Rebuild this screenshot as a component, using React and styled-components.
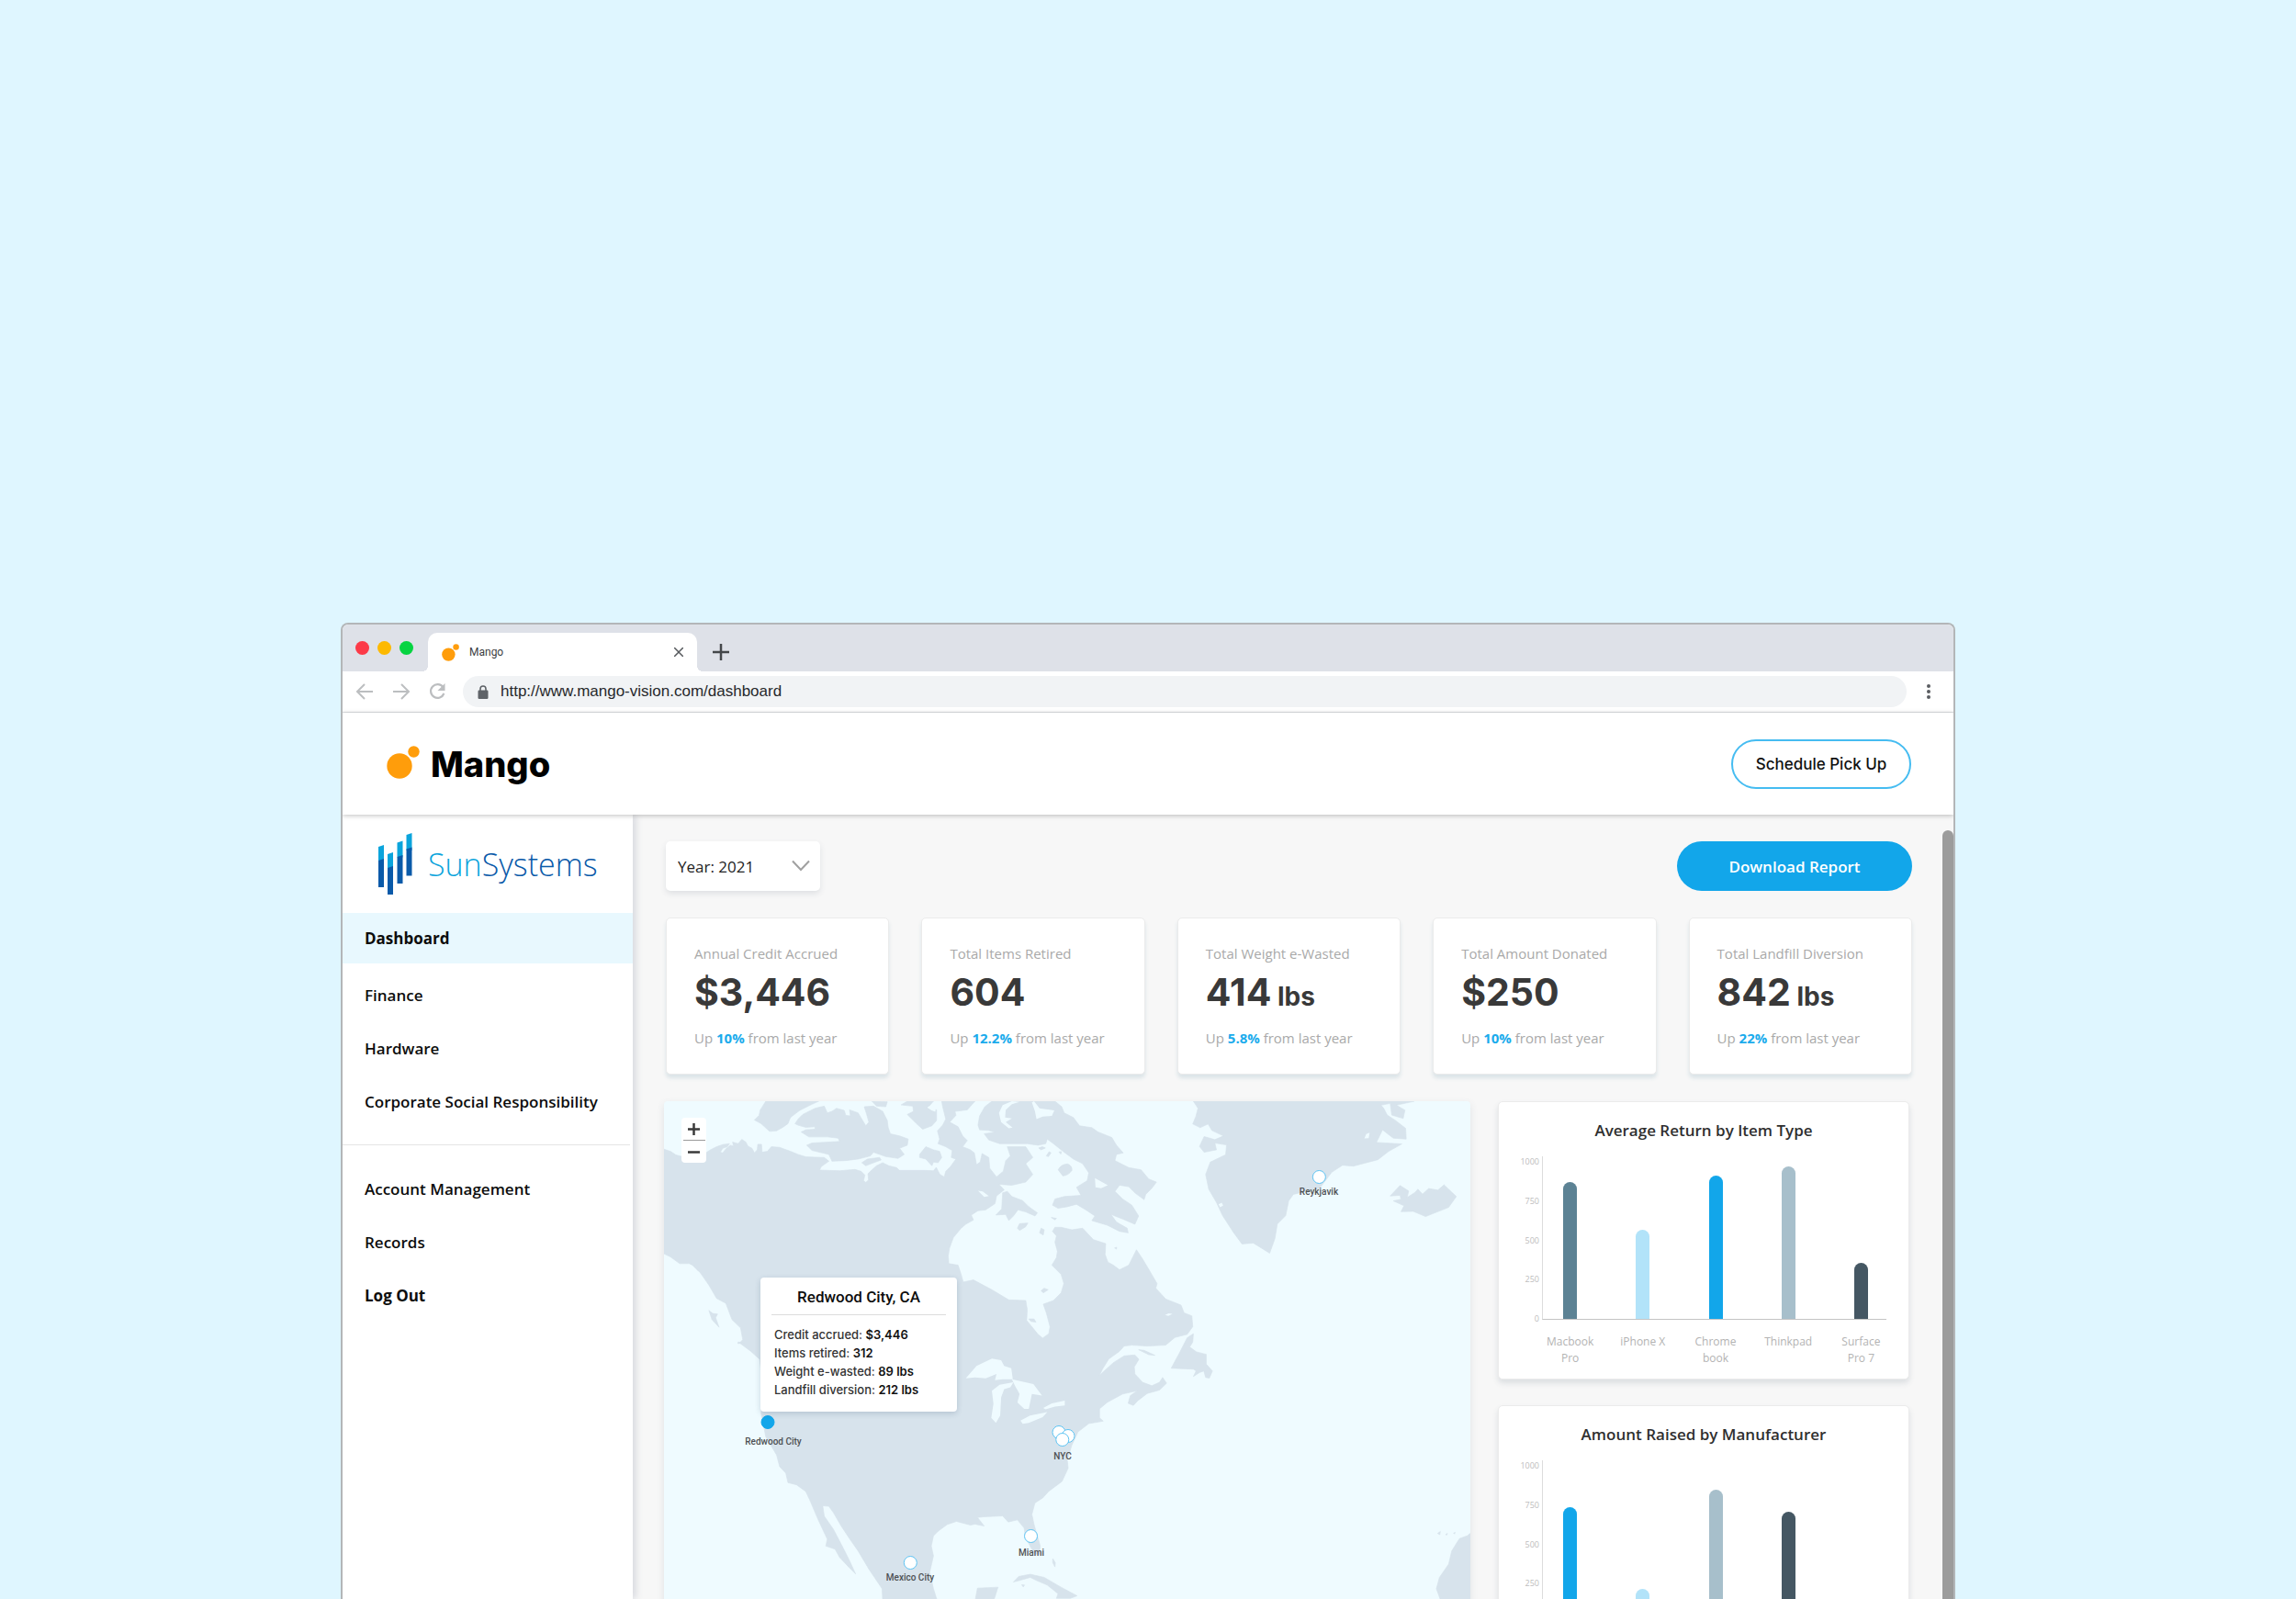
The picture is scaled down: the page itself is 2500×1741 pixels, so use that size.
import React, { useState } from 'react';
import styled, { createGlobalStyle } from 'styled-components';

const GlobalStyle = createGlobalStyle`
  * {
    box-sizing: border-box;
  }

  body {
    margin: 0;
    background: #dff6ff;
    font-family: 'Open Sans', 'Noto Sans', sans-serif;
    color: #111;
  }

  button, select, input {
    font: inherit;
    color: inherit;
  }

  button {
    cursor: pointer;
  }

  h1, h2, h3, p {
    margin: 0;
    padding: 0;
  }
`;

const Page = styled.div`
  display: flex;
  height: 100vh;
  overflow: hidden;
  padding: 678px 371px 0;
`;

/* ---------- browser window ---------- */

const BrowserWindow = styled.div`
  flex: 1;
  min-width: 0;
  display: flex;
  flex-direction: column;
  overflow: hidden;
  border: 2px solid #b3b6b8;
  border-bottom: none;
  border-radius: 8px 8px 0 0;
  background: white;
`;

const TabStrip = styled.div`
  display: flex;
  align-items: flex-end;
  height: 51px;
  flex-shrink: 0;
  padding-left: 14px;
  background: #dee1e8;
`;

const TrafficLights = styled.div`
  display: flex;
  align-items: center;
  gap: 9px;
  height: 51px;
  margin-right: 16px;
`;

const Light = styled.span`
  width: 15px;
  height: 15px;
  border-radius: 50%;
  background: ${props => props.color};
`;

const Tab = styled.div`
  position: relative;
  display: flex;
  align-items: center;
  width: 293px;
  height: 42px;
  padding: 0 12px 0 15px;
  border-radius: 10px 10px 0 0;
  background: white;
  font-family: Roboto, 'Liberation Sans', sans-serif;
  font-size: 12px;
  color: #3c4043;

  &::before,
  &::after {
    content: '';
    position: absolute;
    bottom: 0;
    width: 6px;
    height: 6px;
  }

  &::before {
    left: -6px;
    background: radial-gradient(circle at 0 0, transparent 6px, white 6px);
  }

  &::after {
    right: -6px;
    background: radial-gradient(circle at 100% 0, transparent 6px, white 6px);
  }

  span {
    flex: 1;
    margin-left: 11px;
  }
`;

const IconButton = styled.button`
  display: flex;
  align-items: center;
  justify-content: center;
  width: ${props => props.$size || 18}px;
  height: ${props => props.$size || 18}px;
  padding: 0;
  border: none;
  background: none;
`;

const NewTab = styled(IconButton)`
  margin: 0 0 12px 17px;
`;

const Toolbar = styled.div`
  display: flex;
  align-items: center;
  height: 45px;
  flex-shrink: 0;
  padding: 0 18px 0 14px;
  border-bottom: 1px solid #dfe1e3;
`;

const NavButtons = styled.div`
  display: flex;
  gap: 20px;
  margin-right: 17px;
`;

const AddressBar = styled.label`
  flex: 1;
  display: flex;
  align-items: center;
  gap: 13px;
  height: 34px;
  margin-right: 15px;
  padding: 0 16px;
  border-radius: 17px;
  background: #f1f3f5;

  input {
    flex: 1;
    border: none;
    padding: 0;
    outline: none;
    background: none;
    font-family: 'Liberation Sans', Arial, sans-serif;
    font-size: 17px;
    color: #27292c;
  }
`;

/* ---------- app header ---------- */

const Header = styled.header`
  position: relative;
  z-index: 2;
  display: flex;
  align-items: center;
  justify-content: space-between;
  height: 111px;
  flex-shrink: 0;
  padding: 0 46px 0 48px;
  background: white;
  box-shadow: 0 1px 5px rgba(0, 0, 0, 0.25);
`;

const Brand = styled.h1`
  display: flex;
  align-items: center;
  gap: 12px;
  font-family: Inter, 'Liberation Sans', sans-serif;
  font-size: 38px;
  font-weight: 800;
  line-height: 44px;
  color: #000;

  svg {
    margin-bottom: 4px;
  }
`;

const PillButton = styled.button`
  width: ${props => props.$primary ? '256px' : '196px'};
  height: 54px;
  border-radius: 27px;
  border: ${props => props.$primary ? 'none' : '2px solid #45bcf1'};
  background: ${props => props.$primary ? '#12a6ea' : 'white'};
  color: ${props => props.$primary ? 'white' : '#111'};
  font-family: ${props => props.$primary ? "'Open Sans'" : 'Inter'}, sans-serif;
  font-size: 17px;
  font-weight: ${props => props.$primary ? 600 : 500};
`;

/* ---------- body ---------- */

const Body = styled.div`
  flex: 1;
  display: flex;
  min-height: 0;
`;

const Sidebar = styled.aside`
  position: relative;
  z-index: 1;
  width: 316px;
  flex-shrink: 0;
  background: white;
  box-shadow: 3px 0 8px rgba(80, 90, 120, 0.2);
`;

const CompanyLogo = styled.div`
  display: flex;
  align-items: center;
  gap: 17px;
  height: 107px;
  padding-left: 39px;
  font-size: 34px;
  font-weight: 300;
  color: #0a5aa9;

  em {
    font-style: normal;
    color: #0ba4dc;
  }
`;

const NavLink = styled.a`
  display: flex;
  align-items: center;
  height: ${props => props.$active ? '55px' : '58px'};
  margin-bottom: ${props => props.$active ? '5px' : '0'};
  padding-left: 24px;
  background: ${props => props.$active ? '#e8f8fe' : 'none'};
  font-size: 17px;
  font-weight: ${props => props.$strong ? 700 : 600};
  color: #0d0d0d;
  text-decoration: none;
`;

const Divider = styled.hr`
  height: 1px;
  margin: 18px 3px 18px 0;
  border: none;
  background: #e4e4e4;
`;

const Main = styled.main`
  position: relative;
  flex: 1;
  min-width: 0;
  overflow: hidden;
  background: #f7f7f7;
`;

const Scrollbar = styled.div`
  position: absolute;
  top: 17px;
  right: 0;
  bottom: 0;
  width: 12px;
  border-radius: 6px 6px 0 0;
  background: #9c9c9c;
`;

const Filters = styled.div`
  display: flex;
  align-items: center;
  justify-content: space-between;
  padding: 29px 45px 0 36px;
`;

const YearSelect = styled.div`
  position: relative;

  select {
    display: block;
    appearance: none;
    width: 168px;
    height: 54px;
    padding: 0 40px 0 13px;
    border: none;
    border-radius: 5px;
    background: white;
    box-shadow: 0 3px 6px rgba(60, 80, 100, 0.13);
    font-size: 17px;
    color: #222;
  }

  svg {
    position: absolute;
    top: 20px;
    right: 11px;
    pointer-events: none;
  }
`;

const Stats = styled.section`
  display: grid;
  grid-template-columns: repeat(5, 1fr);
  gap: 35px;
  padding: 29px 45px 0 36px;
`;

const StatCard = styled.div`
  padding: 28px 20px 29px 30px;
  border: 1px solid #ebebeb;
  border-radius: 5px;
  background: white;
  box-shadow: 0 4px 4px #dbe4e8;
  font-size: 15px;
  line-height: 20px;
  color: #a9a9a9;
  white-space: nowrap;

  .value {
    margin: 8px 0 16px;
    font-family: Inter, 'Liberation Sans', sans-serif;
    font-size: 41px;
    font-weight: 700;
    line-height: 48px;
    color: #393939;
  }

  .value small {
    font-size: 28px;
    line-height: 1;
  }

  strong {
    color: #1aabec;
  }
`;

const Panels = styled.section`
  display: grid;
  grid-template-columns: minmax(0, 1fr) 448px;
  gap: 30px;
  padding: 29px 48px 0 34px;
`;

/* ---------- map ---------- */

const MapPanel = styled.div`
  position: relative;
  overflow: hidden;
  border-radius: 4px;
  background: #effbff;
  box-shadow: 0 3px 8px rgba(60, 80, 100, 0.12);
`;

const MapCanvas = styled.svg`
  position: absolute;
  inset: 0;
  width: 100%;
  height: 100%;
`;

const ZoomControl = styled.div`
  position: absolute;
  top: 18px;
  left: 19px;
  display: flex;
  flex-direction: column;
  align-items: center;
  width: 27px;
  border-radius: 4px;
  background: white;

  hr {
    width: 24px;
    height: 1px;
    margin: 0;
    border: none;
    background: #9a9a9a;
  }
`;

const Pin = styled.div`
  position: absolute;
  left: ${props => props.$x}px;
  top: ${props => props.$y}px;
  display: flex;
  flex-direction: column;
  align-items: center;
  gap: ${props => props.$gap || 2}px;
  transform: translate(-50%, -8px);
  font-family: Roboto, 'Liberation Sans', sans-serif;
  font-size: 10px;
  font-weight: 500;
  line-height: 14px;
  color: #4d5053;
  white-space: nowrap;
`;

const Dot = styled.span`
  width: 15px;
  height: 15px;
  border: 1px solid ${props => props.$active ? '#12a6ea' : '#5cc3f3'};
  border-radius: 50%;
  background: ${props => props.$active ? '#12a6ea' : 'white'};
`;

const Tooltip = styled.div`
  position: absolute;
  left: 105px;
  top: 192px;
  width: 214px;
  padding: 7px 12px 14px;
  border-radius: 4px;
  background: white;
  box-shadow: 0 2px 6px rgba(40, 70, 100, 0.2);

  h3 {
    margin-bottom: 11px;
    padding-bottom: 5px;
    border-bottom: 1px solid #dcdcdc;
    font-family: Roboto, 'Liberation Sans', sans-serif;
    font-size: 17px;
    font-weight: 500;
    line-height: 28px;
    text-align: center;
    color: #0d0d0d;
  }

  p {
    padding-left: 3px;
    font-family: Inter, 'Liberation Sans', sans-serif;
    font-size: 13px;
    font-weight: 500;
    line-height: 20px;
    color: #333;
    white-space: nowrap;
  }

  strong {
    font-weight: 600;
    color: #111;
  }
`;

/* ---------- charts ---------- */

const ChartColumn = styled.div`
  display: flex;
  flex-direction: column;
  gap: 28px;
`;

const ChartCard = styled.div`
  padding: 19px 0 13px;
  border: 1px solid #ebebeb;
  border-radius: 5px;
  background: white;
  box-shadow: 0 4px 6px rgba(60, 80, 100, 0.14);

  h2 {
    font-size: 17px;
    font-weight: 600;
    line-height: 24px;
    text-align: center;
    color: #2f2f2f;
  }
`;

const ChartBody = styled.div`
  display: flex;
  align-items: flex-start;
  gap: 3px;
  margin-top: 16px;
  padding: 0 24px 0 18px;
`;

const Ticks = styled.div`
  display: flex;
  flex-direction: column;
  justify-content: space-between;
  width: 26px;
  height: 183px;
  font-size: 9px;
  line-height: 12px;
  text-align: right;
  color: #bdbdbd;
`;

const Plot = styled.div`
  flex: 1;
  display: flex;
  align-items: flex-end;
  justify-content: space-between;
  height: 178px;
  padding: 0 20px 0 22px;
  border-left: 1px solid #dcdcdc;
  border-bottom: 1px solid #c4c4c4;
`;

const Bar = styled.div`
  width: 15px;
  border-radius: 8px 8px 0 0;
  background: ${props => props.color};
`;

const ChartLabels = styled.div`
  display: grid;
  grid-template-columns: repeat(5, 1fr);
  min-height: 46px;
  padding: 10px 12px 0 38px;
  font-size: 12px;
  line-height: 18px;
  text-align: center;
  color: #b3b3b3;

  span {
    padding: 0 10px;
  }
`;

const stats = [
  { label: 'Annual Credit Accrued', value: '$3,446', change: '10%' },
  { label: 'Total Items Retired', value: '604', change: '12.2%' },
  { label: 'Total Weight e-Wasted', value: '414', unit: 'lbs', change: '5.8%' },
  { label: 'Total Amount Donated', value: '$250', change: '10%' },
  { label: 'Total Landfill Diversion', value: '842', unit: 'lbs', change: '22%' }
];

const returnByType = [
  { label: 'Macbook Pro', value: 866, color: '#5c8294' },
  { label: 'iPhone X', value: 564, color: '#b2e3f9' },
  { label: 'Chrome book', value: 907, color: '#12a6ea' },
  { label: 'Thinkpad', value: 965, color: '#a7bfcb' },
  { label: 'Surface Pro 7', value: 355, color: '#455763' }
];

const raisedByManufacturer = [
  { value: 733, color: '#12a6ea' },
  { value: 215, color: '#b2e3f9' },
  { value: 843, color: '#a7bfcb' },
  { value: 704, color: '#455763' },
  { value: 0, color: '#5c8294' }
];

const pins = [
  { x: 713, y: 83, gap: 2, name: 'Reykjavik' },
  { x: 430, y: 361 },
  { x: 440, y: 365 },
  { x: 434, y: 369, gap: 4, name: 'NYC' },
  { x: 400, y: 474, gap: 4, name: 'Miami' },
  { x: 268, y: 503, gap: 2, name: 'Mexico City' }
];

// coastlines, three units to a pixel at the default zoom
const land = [
  // mainland
  `M0 156L21 163 39 175 56 179 81 188 111 184 136 168 151 158 171 148 191 141 213 138 206 148 191 153 183 166 191 168 203 153 216 143 226 146
   223 133 241 138 253 124 266 133 273 146 286 153 294 168 303 158 305 140 317 140 319 166 336 163 349 148 376 150 411 163 436 173 461 181
   491 182 521 183 536 195 511 213 506 224 571 226 621 222 641 228 653 240 649 258 656 264 665 256 663 236 676 223 691 210 711 200 731 210
   756 216 766 225 849 225 876 226 885 215 897 238 911 246 916 228 931 213 949 188 934 183 937 160 926 154 916 148 891 138 896 123 889 96
   906 78 916 58 906 18 903 0 1011 0 986 28 946 33 949 46 929 68 956 83 971 113 986 128 971 148 996 158 1009 168 1016 206 1028 198 1034 170
   1056 183 1059 218 1081 246 1103 228 1111 193 1126 178 1116 148 1176 148 1199 183 1176 203 1199 238 1176 263 1131 273 1089 270 1106 288
   1081 308 1076 333 1046 353 1021 356 999 370 1006 386 981 400 966 413 941 443 928 478 924 503 926 528 956 533 966 563 973 588 1006 581
   1066 613 1121 646 1176 648 1181 678 1179 713 1196 733 1216 758 1231 770 1251 756 1255 733 1243 688 1233 660 1266 648 1291 623 1300 593
   1291 563 1261 533 1276 508 1279 488 1271 458 1276 438 1263 423 1271 410 1291 410 1326 418 1361 413 1396 450 1436 463 1434 498 1443 523
   1461 533 1481 548 1511 533 1536 483 1556 513 1571 538 1603 593 1599 608 1631 643 1681 663 1691 688 1716 698 1719 733 1701 758 1661 768
   1631 793 1571 796 1521 793 1496 796 1481 813 1446 838 1426 870 1416 891 1431 877 1461 850 1496 828 1531 825 1544 839 1529 864 1531 887
   1556 914 1586 925 1611 914 1621 898 1634 917 1611 939 1571 950 1541 973 1526 989 1509 982 1516 957 1539 941 1491 952 1441 979 1416 1000
   1416 1029 1428 1040 1381 1048 1346 1075 1326 1118 1311 1166 1314 1193 1294 1236 1251 1268 1231 1290 1206 1306 1196 1343 1203 1376
   1223 1445 1221 1473 1206 1472 1191 1448 1174 1413 1171 1388 1149 1361 1119 1368 1101 1348 1041 1351 1019 1353 1041 1381 1011 1375
   996 1378 951 1366 921 1376 891 1398 876 1413 869 1446 876 1478 864 1531 876 1585 889 1626 950 1680 1005 1670 1011 1626 1019 1583
   1086 1580 1071 1626 1060 1700 1150 1740 1150 1893 1000 1893 720 1720 711 1626 709 1585 666 1521 631 1462 601 1419 576 1381 551 1338
   536 1317 516 1315 521 1349 551 1392 576 1440 601 1489 623 1537 601 1515 571 1483 556 1456 526 1446 531 1424 501 1360 476 1301 461 1269
   431 1247 403 1240 396 1209 376 1188 366 1150 331 1091 316 1016 319 909 311 839 281 812 246 786 256 775 249 737 221 710 201 657 171 641
   146 598 116 555 81 528 51 528 21 506 0 496Z`,
  // Banks and Victoria islands
  'M331 0L313 28 309 46 294 61 316 73 343 98 366 96 386 85 403 73 411 53 441 30 481 10 503 0Z',
  `M426 73L436 58 451 43 491 23 521 16 531 38 546 33 561 23 586 30 591 46 606 48 603 28 631 38 646 63 656 80 666 68 659 43 651 18 681 16
   711 33 726 63 729 86 736 106 766 113 794 123 791 143 766 153 781 173 761 186 721 180 681 166 671 178 631 188 591 193 546 195 536 173
   481 160 464 143 481 136 571 131 566 120 531 116 471 116 446 100 461 93 491 91 491 83 461 85 436 78Z`,
  'M643 200L661 188 701 183 706 191 681 200 656 210Z',
  'M676 0L726 2 721 18 691 16Z',
  'M791 0L771 12 809 16 811 33 791 43 821 73 841 91 871 80 886 63 886 28 856 23 876 0Z',
  'M831 173L851 148 876 158 896 163 903 183 891 200 876 198 871 210 851 188 831 183Z',
  // Baffin
  `M1066 0L1043 18 1026 48 1021 78 1026 93 1056 95 1076 101 1041 106 1056 126 1091 138 1181 138 1216 143 1241 138 1246 123 1266 138
   1301 166 1331 188 1361 203 1381 233 1376 258 1341 280 1356 306 1301 310 1271 318 1263 338 1281 348 1311 343 1341 335 1371 353 1401 373
   1391 388 1441 403 1481 423 1509 428 1506 413 1471 393 1453 368 1491 383 1531 400 1543 373 1521 338 1491 318 1466 293 1481 273 1511 278
   1531 298 1561 320 1566 303 1586 283 1601 263 1576 253 1551 223 1511 216 1466 193 1471 173 1493 168 1471 143 1456 118 1411 100 1391 86
   1351 80 1331 53 1301 38 1293 18 1271 0Z`,
  // Southampton and the islands of Hudson Bay
  `M1079 370L1098 350 1101 298 1116 293 1131 310 1166 323 1186 343 1214 363 1206 373 1176 360 1151 353 1136 373 1121 388 1111 368Z`,
  'M1149 413L1156 398 1183 396 1176 408 1156 420ZM1221 428L1226 413 1236 418 1233 435ZM1259 378L1276 381 1271 386Z',
  'M1226 616L1236 608 1249 613 1233 623ZM1186 708L1203 708 1209 718 1193 716ZM1465 477L1472 475 1471 481Z',
  'M1281 224Q1290 205 1312 204 1328 210 1326 225 1315 241 1296 243 1281 238ZM1333 216L1345 214 1358 221 1343 224Z',
  'M1218 152L1230 148 1240 152 1226 158ZM1243 178L1252 164 1258 168 1250 180ZM1284 165L1292 164 1290 172Z',
  // Anticosti, Newfoundland
  'M1543 808L1561 810 1596 826 1576 824Z',
  `M1721 756L1701 769 1676 818 1649 868 1721 871 1730 877 1721 895 1741 882 1755 877 1761 898 1773 900 1783 877 1763 855 1763 823
   1731 815 1709 799 1719 783Z`,
  // Greenland
  `M1721 0L1736 23 1729 50 1719 74 1743 86 1769 74 1781 95 1819 113 1791 125 1756 115 1741 147 1756 166 1796 158 1791 136 1829 142
   1826 174 1776 198 1761 238 1771 286 1796 329 1816 372 1851 426 1879 464 1916 461 1969 494 1986 447 1994 399 2021 372 2031 324 2046 303
   2091 292 2131 284 2171 231 2206 208 2241 211 2321 190 2356 163 2399 139 2316 134 2336 93 2371 120 2413 123 2411 88 2376 61 2351 45
   2340 23 2331 13 2361 7 2366 45 2403 56 2409 29 2381 13 2439 0Z`,
  // Iceland
  `M2361 308L2376 292 2393 274 2421 292 2416 313 2441 297 2451 286 2466 302 2486 284 2516 289 2536 272 2576 310 2551 345 2476 375
   2436 358 2396 359 2406 340 2371 324 2396 319 2393 306Z`,
  // West Africa
  'M2640 1390L2611 1413 2586 1422 2561 1462 2551 1505 2521 1548 2511 1585 2526 1626 2540 1750 2640 1893Z',
  'M2515 1405L2524 1399 2522 1409ZM2541 1409L2547 1405 2545 1410ZM2567 1404L2572 1402 2570 1407Z',
  // Caribbean
  `M1136 1563L1153 1545 1191 1538 1236 1548 1291 1580 1343 1608 1321 1616 1276 1616 1281 1601 1246 1573 1211 1558 1191 1548 1156 1558Z`,
  'M1366 1621L1421 1626 1400 1660 1366 1650ZM1163 1572L1172 1573 1168 1579ZM1264 1487L1272 1500 1271 1514 1264 1500Z',
  // Pacific coast islands
  'M146 680L158 690 174 692 168 704 179 735 156 710ZM241 783L262 786 240 788Z'
];

const water = [
  // Great Lakes
  'M981 901L1016 861 1066 837 1096 842 1106 861 1129 868 1134 904 1101 904 1076 907 1081 887 1046 901 1011 898Z',
  'M1066 941L1091 922 1136 914 1126 930 1106 936 1096 963 1093 1022 1079 1046 1064 1029 1071 984Z',
  'M1131 904L1201 920 1229 957 1196 952 1186 1000 1171 1000 1149 979 1156 952 1141 925Z',
  'M1233 997L1261 982 1303 973 1303 989 1271 993 1240 1002Z',
  'M1159 1038L1190 1022 1246 1011 1231 1027 1186 1046 1166 1049Z',
  // northern lakes and sounds
  'M1021 291L1036 293 1056 308 1041 311ZM1401 250L1443 273 1421 283 1403 280ZM1629 695L1640 690 1653 691 1640 698Z',
  'M1131 0L1101 13 1089 38 1096 68 1121 88 1133 86 1111 68 1131 56 1109 53 1111 28 1131 10 1156 2Z',
  'M1203 0L1221 23 1269 30 1261 48 1231 50 1211 58 1206 33 1196 4Z',
  'M856 20L866 14 884 20 882 34 870 30ZM2277 121L2283 107 2294 102 2291 120ZM1803 335L1813 330 1818 339 1808 345Z',
  'M1086 214L1095 208 1096 220 1088 224Z',
  // Inside Passage
  'M78 528L92 545 88 560 106 572 118 595 140 620 130 596 116 570 106 548 92 534ZM100 585L114 600 128 622 110 608Z'
];

function MangoMark({ size }) {
  return (
    <svg width={size} height={size} viewBox="0 0 36 36" fill="#ff9d0b" aria-hidden="true">
      <circle cx="14" cy="22" r="13.7" />
      <circle cx="29.5" cy="6.5" r="6.2" />
    </svg>
  );
}

function SunSystemsMark() {
  return (
    <svg width="37" height="68" viewBox="0 0 37 68" aria-hidden="true">
      <g fill="#0ba4dc">
        <path d="M0 15l6-2v18H0zM10 23l6-2v18h-6zM20.500 10.500l6-2v18h-6zM30.500 2l6-2v19h-6z" />
      </g>
      <g fill="#0a5aa9">
        <path d="M0 30l6-2v31H0zM10 38l6-2v31h-6zM20.500 26l6-2v31h-6zM30.500 17.500l6-2v31h-6z" />
      </g>
    </svg>
  );
}

function Chart({ title, data }) {
  return (
    <ChartCard>
      <h2>{title}</h2>
      <ChartBody>
        <Ticks>
          {[1000, 750, 500, 250, 0].map(tick => <span key={tick}>{tick}</span>)}
        </Ticks>
        <Plot>
          {data.map(item => (
            <Bar
              key={item.color}
              color={item.color}
              style={{ height: `${Math.round(item.value * 0.172)}px` }}
            />
          ))}
        </Plot>
      </ChartBody>
      <ChartLabels>
        {data.map(item => <span key={item.color}>{item.label}</span>)}
      </ChartLabels>
    </ChartCard>
  );
}

function OfficeMap() {
  return (
    <MapPanel>
      <MapCanvas viewBox="0 0 2634 1893" preserveAspectRatio="xMinYMin slice" aria-hidden="true">
        <g fill="#d7e3ec" stroke="#d7e3ec" strokeWidth="2" strokeLinejoin="round">
          {land.map(d => <path key={d} d={d} />)}
        </g>
        <g fill="#effbff">
          {water.map(d => <path key={d} d={d} />)}
        </g>
      </MapCanvas>

      <ZoomControl>
        <IconButton $size={24} aria-label="Zoom in">
          <svg width="13" height="13" stroke="#3a3a3a" strokeWidth="2.500">
            <path d="M6.500 0v13M0 6.500h13" />
          </svg>
        </IconButton>
        <hr />
        <IconButton $size={24} aria-label="Zoom out">
          <svg width="13" height="13" stroke="#3a3a3a" strokeWidth="2.500">
            <path d="M0 6.500h13" />
          </svg>
        </IconButton>
      </ZoomControl>

      {pins.map(pin => (
        <Pin key={`${pin.x}-${pin.y}`} $x={pin.x} $y={pin.y} $gap={pin.gap}>
          <Dot />
          {pin.name}
        </Pin>
      ))}
      <Pin $x={113} $y={350}>
        <Dot $active />
      </Pin>
      <Pin $x={119} $y={372}>
        Redwood City
      </Pin>

      <Tooltip role="tooltip">
        <h3>Redwood City, CA</h3>
        <p>Credit accrued: <strong>$3,446</strong></p>
        <p>Items retired: <strong>312</strong></p>
        <p>Weight e-wasted: <strong>89 lbs</strong></p>
        <p>Landfill diversion: <strong>212 lbs</strong></p>
      </Tooltip>
    </MapPanel>
  );
}

function BrowserChrome() {
  return (
    <>
      <TabStrip>
        <TrafficLights>
          <Light color="#fc3a48" />
          <Light color="#fdb900" />
          <Light color="#06d441" />
        </TrafficLights>
        <Tab>
          <MangoMark size={19} />
          <span>Mango</span>
          <IconButton $size={16} aria-label="Close tab">
            <svg width="10" height="10" stroke="#55585c" strokeWidth="1.500">
              <path d="M0 0l10 10M10 0L0 10" />
            </svg>
          </IconButton>
        </Tab>
        <NewTab aria-label="New tab">
          <svg width="18" height="18" stroke="#44474a" strokeWidth="2.500">
            <path d="M9 0v18M0 9h18" />
          </svg>
        </NewTab>
      </TabStrip>
      <Toolbar>
        <NavButtons>
          <IconButton $size={20} aria-label="Back">
            <svg width="20" height="20" fill="none" stroke="#bcbec0" strokeWidth="2">
              <path d="M19 10H2.500M10 2l-8 8 8 8" />
            </svg>
          </IconButton>
          <IconButton $size={20} aria-label="Forward">
            <svg width="20" height="20" fill="none" stroke="#bcbec0" strokeWidth="2">
              <path d="M1 10h16.500M10 2l8 8-8 8" />
            </svg>
          </IconButton>
          <IconButton $size={20} aria-label="Reload">
            <svg width="20" height="20" fill="none" stroke="#bcbec0" strokeWidth="2.200">
              <path d="M15.500 5.200A7.400 7.400 0 1 0 16.400 12" />
              <path d="M17.500 1v8h-8z" fill="#bcbec0" stroke="none" />
            </svg>
          </IconButton>
        </NavButtons>
        <AddressBar>
          <svg width="12" height="15" viewBox="0 0 12 15" aria-hidden="true">
            <path d="M3 7V4a3 3 0 0 1 6 0v3" fill="none" stroke="#5f6368" strokeWidth="1.600" />
            <rect x="0.500" y="5.500" width="11" height="9.500" rx="1.200" fill="#5f6368" />
          </svg>
          <input type="text" aria-label="Address" defaultValue="http://www.mango-vision.com/dashboard" />
        </AddressBar>
        <IconButton aria-label="More">
          <svg width="4" height="16" fill="#5a5d61">
            <circle cx="2" cy="2" r="2" />
            <circle cx="2" cy="8" r="2" />
            <circle cx="2" cy="14" r="2" />
          </svg>
        </IconButton>
      </Toolbar>
    </>
  );
}

function App() {
  const [year, setYear] = useState('2021');

  return (
    <Page>
      <GlobalStyle />
      <BrowserWindow>
        <BrowserChrome />

        <Header>
          <Brand>
            <MangoMark size={36} />
            Mango
          </Brand>
          <PillButton>Schedule Pick Up</PillButton>
        </Header>

        <Body>
          <Sidebar>
            <CompanyLogo>
              <SunSystemsMark />
              <span><em>Sun</em>Systems</span>
            </CompanyLogo>
            <nav>
              <NavLink href="#dashboard" $active $strong>Dashboard</NavLink>
              <NavLink href="#finance">Finance</NavLink>
              <NavLink href="#hardware">Hardware</NavLink>
              <NavLink href="#csr">Corporate Social Responsibility</NavLink>
              <Divider />
              <NavLink href="#account">Account Management</NavLink>
              <NavLink href="#records">Records</NavLink>
              <NavLink href="#logout" $strong>Log Out</NavLink>
            </nav>
          </Sidebar>

          <Main>
            <Filters>
              <YearSelect>
                <select aria-label="Year" value={year} onChange={e => setYear(e.target.value)}>
                  <option value="2021">Year: 2021</option>
                </select>
                <svg width="20" height="13" fill="none" stroke="#a0a0a0" strokeWidth="2">
                  <path d="M1 1.500l9 9.500 9-9.500" />
                </svg>
              </YearSelect>
              <PillButton $primary>Download Report</PillButton>
            </Filters>

            <Stats>
              {stats.map(stat => (
                <StatCard key={stat.label}>
                  <p>{stat.label}</p>
                  <p className="value">
                    {stat.value}
                    {stat.unit && <small> {stat.unit}</small>}
                  </p>
                  <p>Up <strong>{stat.change}</strong> from last year</p>
                </StatCard>
              ))}
            </Stats>

            <Panels>
              <OfficeMap />
              <ChartColumn>
                <Chart title="Average Return by Item Type" data={returnByType} />
                <Chart title="Amount Raised by Manufacturer" data={raisedByManufacturer} />
              </ChartColumn>
            </Panels>
            <Scrollbar />
          </Main>
        </Body>
      </BrowserWindow>
    </Page>
  );
}

export default App;
